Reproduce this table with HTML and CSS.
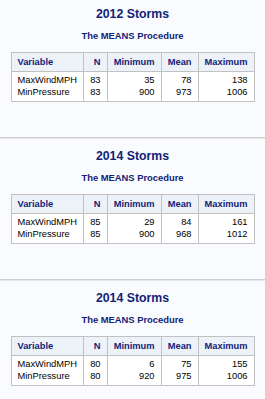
FILE: index.html
```html
<!DOCTYPE html>
<html>
<head>
<meta charset="utf-8">
<link rel="stylesheet" href="styles.css">
</head>
<body>
<div class="section first">
  <h1 class="title">2012 Storms</h1>
  <h2 class="proc">The MEANS Procedure</h2>
  <table class="means">
    <colgroup><col class="c1"><col class="c2"><col class="c3"><col class="c4"><col class="c5"></colgroup>
    <thead><tr><th class="l">Variable</th><th>N</th><th>Minimum</th><th>Mean</th><th>Maximum</th></tr></thead>
    <tbody><tr><td class="l">MaxWindMPH<br>MinPressure</td><td>83<br>83</td><td>35<br>900</td><td>78<br>973</td><td>138<br>1006</td></tr></tbody>
  </table>
</div>
<div class="sep"></div>
<div class="section">
  <h1 class="title">2014 Storms</h1>
  <h2 class="proc">The MEANS Procedure</h2>
  <table class="means">
    <colgroup><col class="c1"><col class="c2"><col class="c3"><col class="c4"><col class="c5"></colgroup>
    <thead><tr><th class="l">Variable</th><th>N</th><th>Minimum</th><th>Mean</th><th>Maximum</th></tr></thead>
    <tbody><tr><td class="l">MaxWindMPH<br>MinPressure</td><td>85<br>85</td><td>29<br>900</td><td>84<br>968</td><td>161<br>1012</td></tr></tbody>
  </table>
</div>
<div class="sep"></div>
<div class="section">
  <h1 class="title">2014 Storms</h1>
  <h2 class="proc">The MEANS Procedure</h2>
  <table class="means">
    <colgroup><col class="c1"><col class="c2"><col class="c3"><col class="c4"><col class="c5"></colgroup>
    <thead><tr><th class="l">Variable</th><th>N</th><th>Minimum</th><th>Mean</th><th>Maximum</th></tr></thead>
    <tbody><tr><td class="l">MaxWindMPH<br>MinPressure</td><td>80<br>80</td><td>6<br>920</td><td>75<br>975</td><td>155<br>1006</td></tr></tbody>
  </table>
</div>
</body>
</html>
```

FILE: styles.css
```css
html, body {
  margin: 0;
  padding: 0;
  background: #fafbfe;
  font-family: "Liberation Sans", Arial, sans-serif;
}
.section {
  padding: 10px 0 35px;
}
.section.first {
  padding-top: 7px;
}
.title {
  margin: 0;
  font-size: 12.3px;
  line-height: 15px;
  font-weight: bold;
  color: #112277;
  text-align: center;
}
.proc {
  margin: 8px 0 10px;
  font-size: 9.4px;
  line-height: 12px;
  font-weight: bold;
  color: #112277;
  text-align: center;
}
.means {
  margin: 0 auto;
  border-collapse: collapse;
  table-layout: fixed;
  width: 243px;
  border: 1px solid #c1c1c1;
  font-size: 9.3px;
}
.c1 { width: 72px; }
.c2 { width: 24px; }
.c3 { width: 54px; }
.c4 { width: 37px; }
.c5 { width: 56px; }
.means th, .means td {
  border: 1px solid #c1c1c1;
  text-align: right;
  white-space: nowrap;
}
.means th {
  background: #edf2f9;
  color: #112277;
  font-weight: bold;
  line-height: 11px;
  padding: 4px 6px 3px;
}
.means td {
  background: #ffffff;
  color: #000000;
  line-height: 11.5px;
  padding: 3px 6px 3px;
}
.means .l {
  text-align: left;
}
.sep {
  height: 1px;
  background: #cdcdcd;
  border-bottom: 1px solid #e6e6e6;
}
```
